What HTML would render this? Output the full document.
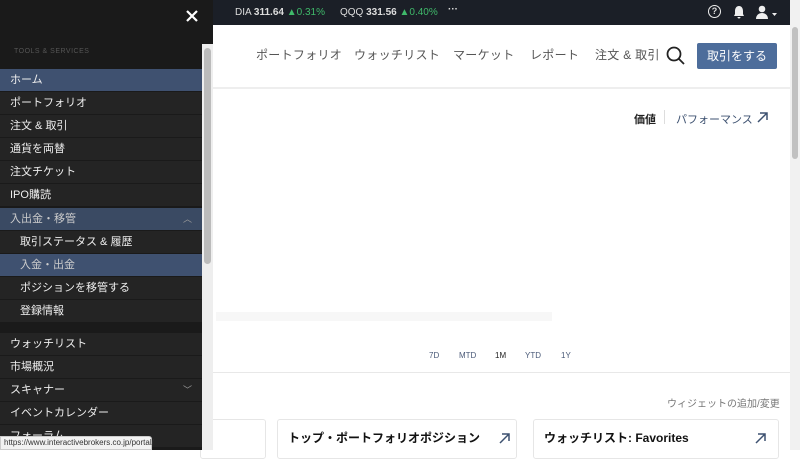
<!DOCTYPE html>
<html><head><meta charset="utf-8"><style>
*{margin:0;padding:0;box-sizing:border-box}
body{width:800px;height:450px;overflow:hidden;position:relative;background:#fff;font-family:"Liberation Sans","Noto Sans CJK JP",sans-serif}
.top{position:absolute;left:0;top:0;width:790px;height:25px;background:#1b1f27;color:#ddd;font-size:10px}
.top span{position:absolute;top:7px}
.g{color:#3fb96a}
.side{position:absolute;left:0;top:0;width:202px;height:450px;background:#1a1a1a}
.item{position:absolute;left:0;width:202px;height:22px;background:#242424;color:#eee;font-size:11px;line-height:22px;padding-left:10px}
.item.sub{padding-left:20px}
.sel{background:#3f5170}
.sb{position:absolute;left:202px;top:44px;width:11px;height:406px;background:#eee}
.thumb{position:absolute;left:204px;top:48px;width:7px;height:216px;background:#bbb;border-radius:4px}
.nav{position:absolute;top:46px;font-size:12px;color:#555;letter-spacing:0.3px}
.btn{position:absolute;left:697px;top:43px;width:80px;height:26px;background:#4d6d9b;color:#fff;font-size:12px;text-align:center;line-height:26px;border-radius:2px}
.card{position:absolute;top:419px;height:40px;border:1px solid #e6e6e6;border-radius:3px;background:#fff}
</style></head><body>
<div class="top">
<span style="left:235px">DIA <b>311.64</b> <span class="g" style="position:static">▲0.31%</span></span>
<span style="left:340px">QQQ <b>331.56</b> <span class="g" style="position:static">▲0.40%</span></span>
<span style="left:448px;top:4px;font-weight:bold">···</span>
<span style="left:708px;top:5px;width:13px;height:13px;border:1.5px solid #eee;border-radius:50%;font-size:9px;text-align:center;line-height:10px;font-weight:bold">?</span>
<svg style="position:absolute;left:733px;top:5px" width="12" height="14"><path d="M6 1C3 1 2 4 2 6v3L1 11h10L10 9V6C10 4 9 1 6 1z M4.5 12a1.5 1.5 0 0 0 3 0z" fill="#eee"/></svg>
<svg style="position:absolute;left:755px;top:5px" width="24" height="14"><circle cx="7" cy="4" r="3.3" fill="#eee"/><path d="M1 14c0-4 3-6 6-6s6 2 6 6z" fill="#eee"/><path d="M17 8h5l-2.5 3z" fill="#eee"/></svg>
</div>
<div style="position:absolute;left:790px;top:0;width:10px;height:450px;background:#f1f1f1"></div>
<div style="position:absolute;left:792px;top:27px;width:6px;height:132px;background:#c1c1c1;border-radius:3px"></div>
<div class="nav" style="left:256px">ポートフォリオ</div>
<div class="nav" style="left:354px">ウォッチリスト</div>
<div class="nav" style="left:453px">マーケット</div>
<div class="nav" style="left:530px">レポート</div>
<div class="nav" style="left:595px">注文 &amp; 取引</div>
<svg style="position:absolute;left:666px;top:46px" width="20" height="20"><circle cx="8" cy="8" r="6.5" fill="none" stroke="#222" stroke-width="1.8"/><line x1="13" y1="13" x2="18" y2="18" stroke="#222" stroke-width="1.8"/></svg>
<div class="btn">取引をする</div>
<div style="position:absolute;left:213px;top:87px;width:577px;height:2px;background:#eee"></div>
<div style="position:absolute;left:634px;top:111px;font-size:11px;font-weight:bold;color:#222">価値</div>
<div style="position:absolute;left:664px;top:110px;width:1px;height:14px;background:#ddd"></div>
<div style="position:absolute;left:676px;top:111px;font-size:11px;color:#3d5170">パフォーマンス</div>
<svg style="position:absolute;left:757px;top:112px" width="11" height="11"><path d="M1 10L10 1M3 1h7v7" fill="none" stroke="#3d5170" stroke-width="1.5"/></svg>
<div style="position:absolute;left:216px;top:312px;width:336px;height:9px;background:#f7f7f7"></div>
<div style="position:absolute;top:351px;font-size:8px;color:#4a5a78;left:429px">7D</div>
<div style="position:absolute;top:351px;font-size:8px;color:#4a5a78;left:459px">MTD</div>
<div style="position:absolute;top:351px;font-size:8px;color:#222;left:495px">1M</div>
<div style="position:absolute;top:351px;font-size:8px;color:#4a5a78;left:525px">YTD</div>
<div style="position:absolute;top:351px;font-size:8px;color:#4a5a78;left:561px">1Y</div>
<div style="position:absolute;left:213px;top:372px;width:577px;height:1px;background:#e8e8e8"></div>
<div style="position:absolute;left:667px;top:395px;font-size:10px;color:#777">ウィジェットの追加/変更</div>
<div class="card" style="left:200px;width:66px"></div>
<div class="card" style="left:277px;width:240px"><div style="position:absolute;left:10px;top:9px;font-size:12px;font-weight:bold;color:#111">トップ・ポートフォリオポジション</div><svg style="position:absolute;left:221px;top:13px" width="11" height="11"><path d="M1 10L10 1M3 1h7v7" fill="none" stroke="#3d5170" stroke-width="1.5"/></svg></div>
<div class="card" style="left:533px;width:246px"><div style="position:absolute;left:10px;top:9px;font-size:12px;font-weight:bold;color:#111">ウォッチリスト: Favorites</div><svg style="position:absolute;left:221px;top:13px" width="11" height="11"><path d="M1 10L10 1M3 1h7v7" fill="none" stroke="#3d5170" stroke-width="1.5"/></svg></div>
<div class="side">
<div style="position:absolute;left:14px;top:48px;font-size:7px;color:#555;letter-spacing:.5px">TOOLS &amp; SERVICES</div>
<div class="item sel" style="top:69px">ホーム</div>
<div class="item" style="top:92px">ポートフォリオ</div>
<div class="item" style="top:115px">注文 &amp; 取引</div>
<div class="item" style="top:138px">通貨を両替</div>
<div class="item" style="top:161px">注文チケット</div>
<div class="item" style="top:184px">IPO購読</div>
<div class="item sel" style="top:208px;background:#3a4a63;color:#ccc">入出金・移管<span style="position:absolute;right:10px;font-size:9px;color:#999">︿</span></div>
<div class="item sub" style="top:231px">取引ステータス &amp; 履歴</div>
<div class="item sub sel" style="top:254px;color:#ccc">入金・出金</div>
<div class="item sub" style="top:277px">ポジションを移管する</div>
<div class="item sub" style="top:300px">登録情報</div>
<div class="item" style="top:333px">ウォッチリスト</div>
<div class="item" style="top:356px">市場概況</div>
<div class="item" style="top:379px">スキャナー<span style="position:absolute;right:10px;font-size:9px;color:#999">﹀</span></div>
<div class="item" style="top:402px">イベントカレンダー</div>
<div class="item" style="top:425px">フォーラム</div>
</div>
<div style="position:absolute;left:202px;top:0;width:11px;height:44px;background:#1a1a1a"></div>
<svg style="position:absolute;left:186px;top:10px" width="12" height="12"><path d="M1 1L11 11M11 1L1 11" stroke="#fff" stroke-width="2.2"/></svg>
<div class="sb"></div><div class="thumb"></div>
<div style="position:absolute;left:0;top:436px;width:152px;height:14px;background:#f2f2f2;border:1px solid #ccc;border-radius:0 3px 0 0;font-size:8px;color:#333;line-height:12px;padding-left:3px">https://www.interactivebrokers.co.jp/portal/</div>
</body></html>
